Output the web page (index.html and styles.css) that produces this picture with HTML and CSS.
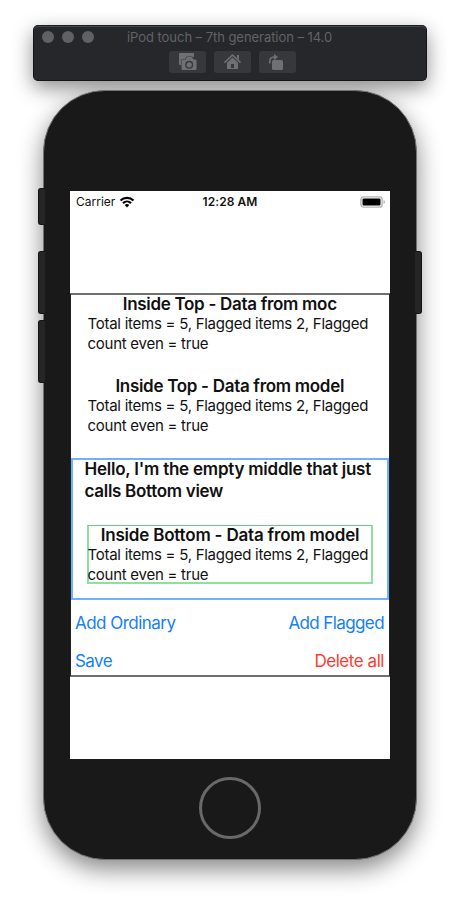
FILE: index.html
```html
<!DOCTYPE html>
<html lang="en">
<head>
<meta charset="utf-8">
<title>iPod touch – 7th generation – 14.0</title>
<link rel="stylesheet" href="styles.css">
</head>
<body>
<header class="toolbar">
  <div class="titlebar">
    <div class="lights"><i></i><i></i><i></i></div>
    <span class="title">iPod touch – 7th generation – 14.0</span>
  </div>
  <div class="tools">
    <div class="tool"><svg viewBox="0 0 37 22"><path d="M11 2h13q1 0 1 1v3h-7l-2 2h-3v6h-2q-1 0-1-1V3q0-1 1-1z"/><path class="cut" fill-rule="evenodd" d="M13.500 8.500h3l1.500-2.500h5l1.500 2.500h2q1 0 1 1v8.500q0 1-1 1H13.500q-1 0-1-1v-8.500q0-1 1-1zM20.200 9.800a4 4 0 1 0 0 8 4 4 0 0 0 0-8z"/><circle cx="20.200" cy="13.800" r="2.600"/></svg></div>
    <div class="tool"><svg viewBox="0 0 37 22"><path class="line" d="M10.500 11.600 18.500 4l8 7.600"/><path d="M23 4h2v5l-2-2z"/><path fill-rule="evenodd" d="M18.500 6.500 24 11.800V18H13v-6.200zM17 13v4h3v-4z"/></svg></div>
    <div class="tool"><svg viewBox="0 0 37 22"><path class="line" d="M10.800 12.500V10q0-4 5-4"/><path d="M15 3l4 3-4 3.300z"/><rect x="13" y="9" width="11" height="10" rx="1.500"/></svg></div>
  </div>
</header>
<main class="phone">
  <i class="key mute"></i><i class="key up"></i><i class="key down"></i><i class="key power"></i>
  <div class="screen">
    <div class="status">
      <div class="carrier"><span>Carrier</span><svg class="wifi" viewBox="0 0 16 12"><path d="M1.500 4.500a9.400 9.400 0 0 1 13 0M4 7.100a5.800 5.800 0 0 1 8 0"/><path class="dot" d="M8 11.500 5.700 9.100a3.200 3.200 0 0 1 4.600 0z"/></svg></div>
      <span class="clock">12:28 AM</span>
      <svg class="battery" viewBox="0 0 26 12"><rect class="shell" x=".9" y=".9" width="21.200" height="10.200" rx="2.700"/><rect x="2.500" y="2.500" width="18" height="7" rx="1"/><path class="cap" d="M23.500 4q1.500.5 1.500 2t-1.500 2z"/></svg>
    </div>
    <section class="outer">
      <div class="block">
        <h2 class="t1">Inside Top - Data from moc</h2>
        <p><span class="l1">Total items = 5, Flagged items 2, Flagged</span><br><span class="l2">count even = true</span></p>
      </div>
      <div class="block second">
        <h2 class="t2">Inside Top - Data from model</h2>
        <p><span class="l1">Total items = 5, Flagged items 2, Flagged</span><br><span class="l2">count even = true</span></p>
      </div>
      <div class="middle">
        <h2 class="hello"><span class="h1">Hello, I'm the empty middle that just</span><br><span class="h2">calls Bottom view</span></h2>
        <div class="bottom">
          <h2 class="t3">Inside Bottom - Data from model</h2>
          <p><span class="l1">Total items = 5, Flagged items 2, Flagged</span><br><span class="l2">count even = true</span></p>
        </div>
      </div>
      <div class="actions"><a class="a1">Add Ordinary</a><a class="a2">Add Flagged</a></div>
      <div class="actions last"><a class="a3">Save</a><a class="a4 danger">Delete all</a></div>
    </section>
  </div>
  <div class="home"></div>
</main>
</body>
</html>
```
FILE: styles.css
```css
* { box-sizing: border-box; }
body {
  margin: 0; width: 460px; height: 902px; overflow: hidden;
  padding-top: 25px; background: #fff; color: #111;
  font-family: Inter, "Liberation Sans", sans-serif;
  display: flex; flex-direction: column; align-items: center;
}
.toolbar {
  width: 394px; height: 56px; flex: none;
  background: #26272b; border-radius: 5px; border: 1px solid #151518;
  border-top-color: #1c1f20;
  box-shadow: inset 0 1px #45474a, 0 7px 20px rgba(0,0,0,.45);
}
.titlebar { display: flex; height: 22px; align-items: center; padding-left: 8px; margin-bottom: 2px; }
.lights { display: flex; gap: 8px; width: 85px; }
.lights i { width: 12px; height: 12px; border-radius: 50%; background: #616163; }
.title { font-size: 13px; color: #626366; white-space: nowrap; letter-spacing: -.05px; }
.tools { display: flex; gap: 8px; justify-content: center; margin-left: 5px; padding-top: 1px; }
.tool { width: 37px; height: 22px; border-radius: 3px; background: #37383c; }
.tool svg { display: block; fill: #6f7074; }
.tool .cut { stroke: #37383c; stroke-width: 1.2; paint-order: stroke; }
.tool .line { fill: none; stroke: #6f7074; stroke-width: 1.6; }
.phone {
  position: relative; width: 374px; height: 770px; flex: none; margin-top: 9px;
  background: #191919; border: 1px solid #727272; border-radius: 62px;
  display: flex; flex-direction: column; align-items: center; padding-top: 100px;
  box-shadow: 0 9px 25px rgba(0,0,0,.48);
}
.toolbar { position: relative; z-index: 1; }
.key {
  position: absolute; left: -6px; width: 7px; height: 63px; background: #252525;
  border: 1px solid #151515; border-right: 0; border-radius: 3px 0 0 3px;
}
.mute { top: 97px; height: 37px; }
.up { top: 160px; }
.down { top: 229px; }
.power { top: 160px; left: auto; right: -6px; transform: scaleX(-1); }
.phone { z-index: 2; clip-path: inset(-9px -60px -60px); }
.screen { width: 320px; height: 568px; flex: none; background: #fff; }
.status {
  height: 20px; display: grid; grid-template-columns: 1fr auto 1fr; align-items: center;
  padding: 1px 4px 0 6px; font-size: 12px;
}
.carrier { display: flex; align-items: center; gap: 4px; }
.carrier span { letter-spacing: 0; }
.wifi { width: 16px; height: 12px; fill: none; stroke: #000; stroke-width: 2.2; }
.wifi .dot { fill: #000; stroke: none; }
.clock { font-weight: 600; letter-spacing: .05px; margin-right: 2px; }
.battery { width: 26px; height: 12px; justify-self: end; }
.shell { fill: none; stroke: #b5b5b5; stroke-width: 1.4; }
.cap { fill: #b5b5b5; }
.outer {
  margin-top: 82px; height: 384px; border: 2px solid #707070;
  border-left: 1px solid #222; border-right: 1px solid #222;
}
h2 { margin: -1px 0 0; font-size: 17px; line-height: 22px; font-weight: 600; text-align: center; white-space: nowrap; }
p { margin: -1px 0 0; font-size: 15px; line-height: 20px; white-space: nowrap; }
.block { height: 82px; padding: 0 17px 0 16.5px; margin-top: -1px; display: flow-root; }
.second { height: 83px; margin-top: 0; }
.middle {
  height: 142px; border: 2px solid #6fb0ff;
  padding: 0 14px 0 11.5px; margin-top: -1px;
}
.middle .hello { text-align: left; margin-top: -2px; }
.bottom {
  height: 59px; margin: 23px 0 0 2.5px; border: 2px solid #8de0a0;
  border-top: 1px solid #62cf80;
}
.bottom h2 { margin-top: -2px; }
.bottom p { margin-left: -1.5px; }
.actions { display: flex; justify-content: space-between; padding: 0 5px 0 4px; margin-top: 12px; font-size: 17px; line-height: 22px; }
.actions a { color: #147efb; white-space: nowrap; }
.actions.last { margin-top: 16px; }
.actions .danger { color: #ff3b30; }
.l1, .l2 { letter-spacing: -.26px; }
.t1, .t2 { letter-spacing: -.3px; }
.t3 { letter-spacing: -.2px; }
.h1 { letter-spacing: -.23px; }
.h2 { letter-spacing: -.3px; }
.a1 { letter-spacing: -.53px; }
.a2 { letter-spacing: -.6px; }
.a3 { letter-spacing: -.6px; }
.a4 { letter-spacing: -.45px; }
.home { width: 62px; height: 62px; border: 3px solid #696969; border-radius: 50%; margin-top: 18px; }
```
